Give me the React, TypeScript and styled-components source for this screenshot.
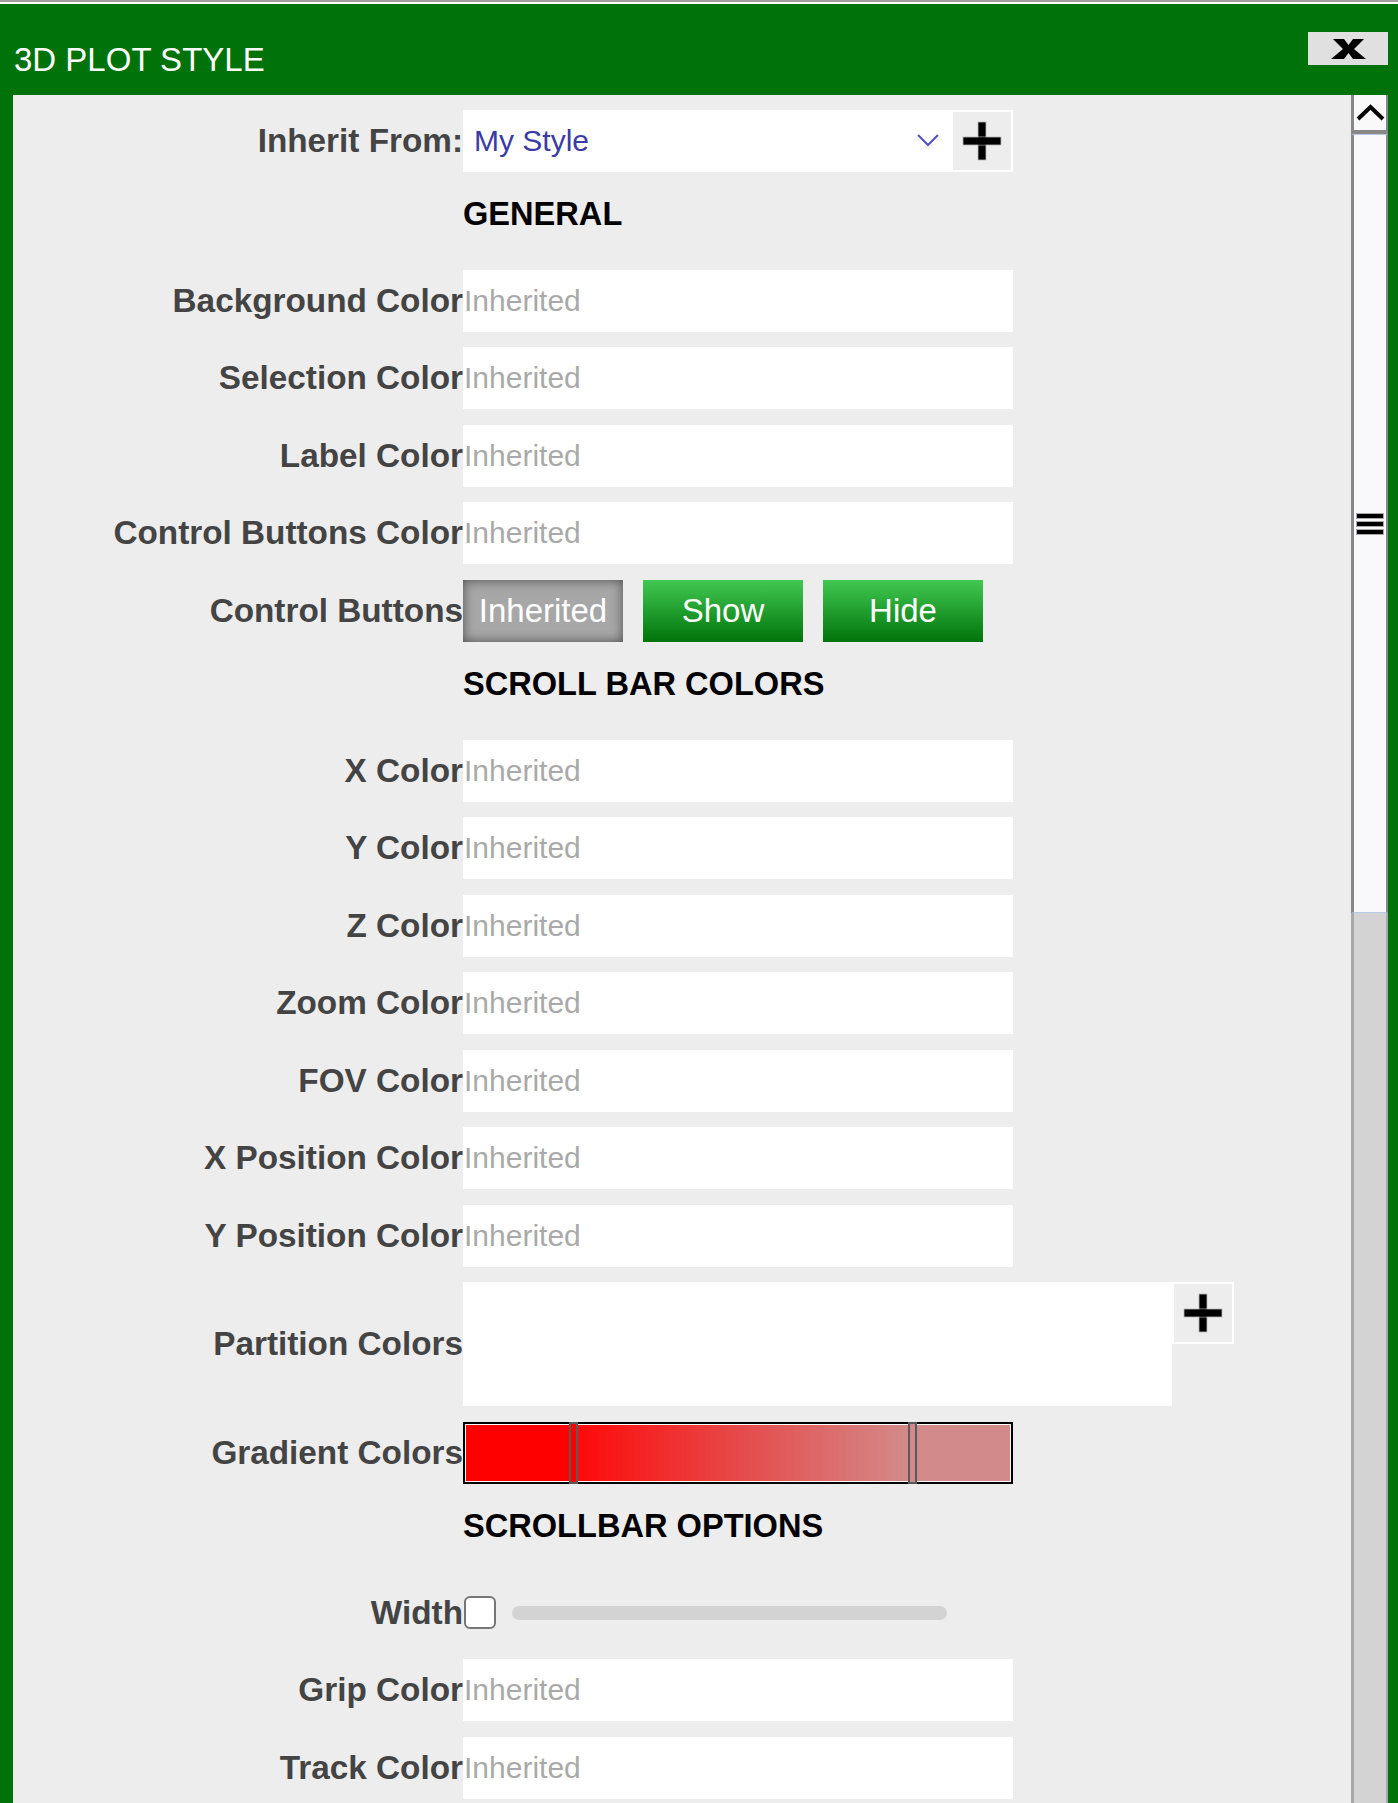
import React from "react";
import styled, { createGlobalStyle } from "styled-components";

const GlobalStyle = createGlobalStyle`
  html, body {
    margin: 0;
    padding: 0;
    background: #fff;
  }
  body {
    font-family: "Liberation Sans", Arial, sans-serif;
  }
`;

const green = "#00720a";

const Page = styled.div`
  height: 1803px;
  box-sizing: border-box;
  border-top: 2px solid #9e9e9e;
  padding-top: 2px;
  background: #fff;
  overflow: hidden;
  display: flex;
  flex-direction: column;
`;

const Dialog = styled.div`
  flex: 1;
  min-height: 0;
  background: ${green};
  padding: 0 10px 0 13px;
  display: flex;
  flex-direction: column;
`;

const Header = styled.div`
  height: 91px;
  flex: none;
  display: flex;
  justify-content: space-between;
  align-items: flex-start;
`;

const Title = styled.div`
  margin: 39px 0 0 1px;
  font-size: 33px;
  line-height: 33px;
  color: #fff;
`;

const CloseButton = styled.button`
  margin-top: 28px;
  width: 80px;
  height: 33px;
  border: none;
  padding: 0;
  background: #e0e0e0;
  display: flex;
  align-items: center;
  justify-content: center;
`;

const Body = styled.div`
  flex: 1;
  min-height: 0;
  display: flex;
  background: #ededed;
  overflow: hidden;
`;

const Form = styled.div`
  flex: 1;
  min-width: 0;
  padding-top: 0;
  & > :first-child {
    margin-top: 14.5px;
  }
`;

const Row = styled.div<{ $h?: number }>`
  display: flex;
  align-items: center;
  margin-top: 15.5px;
  height: ${(p) => p.$h ?? 62}px;
`;

const Label = styled.div`
  width: 450px;
  flex: none;
  text-align: right;
  font-weight: 700;
  font-size: 33.3px;
  color: #444;
  white-space: nowrap;
`;

const Heading = styled.div`
  margin-top: 15.5px;
  height: 67px;
  line-height: 53px;
  padding-left: 450px;
  font-weight: 700;
  font-size: 32.6px;
  color: #000;
`;

const Select = styled.div`
  display: flex;
  width: 550px;
  height: 62px;
  box-sizing: border-box;
  padding: 2px;
  background: #fff;
`;

const SelectValue = styled.div`
  flex: 1;
  display: flex;
  align-items: center;
  justify-content: space-between;
  padding: 0 14px 0 9px;
  font-size: 30px;
  color: #3b3ba5;
`;

const AddButton = styled.div<{ $bordered?: boolean }>`
  width: 58px;
  height: 58px;
  box-sizing: content-box;
  flex: none;
  background: #ededed;
  display: flex;
  align-items: center;
  justify-content: center;
  border: ${(p) => (p.$bordered ? "2px solid #fff" : "none")};
`;

const Input = styled.input`
  width: 550px;
  height: 62px;
  box-sizing: border-box;
  border: none;
  outline: none;
  background: #fff;
  padding: 0 0 0 1px;
  margin: 0;
  font-family: "Liberation Sans", Arial, sans-serif;
  font-size: 30px;
  color: #333;
  &::placeholder {
    color: #a9a9a9;
  }
`;

const ButtonGroup = styled.div`
  display: flex;
  gap: 20px;
`;

const ToggleButton = styled.button<{ $active?: boolean }>`
  width: 160px;
  height: 62px;
  border: none;
  padding: 0;
  font-family: "Liberation Sans", Arial, sans-serif;
  font-size: 33px;
  color: #fff;
  background: ${(p) =>
    p.$active ? "#a7a7a7" : "linear-gradient(to bottom, #42c852, #00740a)"};
  box-shadow: ${(p) => (p.$active ? "inset 0 0 12px rgba(0,0,0,0.55)" : "none")};
`;

const PartitionGroup = styled.div`
  align-self: stretch;
  display: flex;
  align-items: flex-start;
`;

const PartitionBox = styled.div`
  width: 709px;
  height: 124px;
  background: #fff;
`;

const GradientBar = styled.div`
  width: 550px;
  height: 62px;
  box-sizing: border-box;
  border: 2px solid #000;
  box-shadow: inset 0 0 0 1px #fff;
  display: flex;
  padding: 1px;
`;

const Swatch = styled.div<{ $w?: number; $bg: string }>`
  width: ${(p) => (p.$w ? `${p.$w}px` : "auto")};
  flex: ${(p) => (p.$w ? "none" : "1")};
  background: ${(p) => p.$bg};
`;

const Stop = styled.div<{ $bg: string }>`
  width: 5px;
  flex: none;
  margin: -3px 0;
  background: ${(p) => p.$bg};
  border: 2px solid #5a5a5a;
`;

const Check = styled.div`
  margin-left: 1px;
  width: 28px;
  height: 29px;
  border: 2px solid #767676;
  border-radius: 6px;
  background: #fff;
`;

const SliderTrack = styled.div`
  margin-left: 16px;
  width: 435px;
  height: 14px;
  border-radius: 7px;
  background: #d3d3d3;
`;

const Scrollbar = styled.div`
  width: 37px;
  flex: none;
  display: flex;
  flex-direction: column;
`;

const ScrollUp = styled.div`
  height: 35px;
  flex: none;
  background: #f9f9fa;
  border-left: 3px solid #888;
  border-right: 2px solid #888;
  border-bottom: 4px solid #888;
  display: flex;
  align-items: center;
  justify-content: center;
`;

const Thumb = styled.div`
  height: 777px;
  flex: none;
  background: #f9f9fb;
  border-left: 3px solid #888;
  border-right: 2px solid #888;
  border-top: 1px solid #b9cbe8;
  border-bottom: 1px solid #b9cbe8;
  display: flex;
  flex-direction: column;
  align-items: center;
  justify-content: center;
  gap: 4px;
`;

const GripLine = styled.div`
  width: 26px;
  height: 4px;
  background: #000;
  box-shadow: 0 0 0 1px #aaa;
`;

const Track = styled.div`
  flex: 1;
  background: #d3d3d3;
  border-left: 3px solid #a8a8a8;
  border-right: 2px solid #a8a8a8;
`;

const PlusIcon = () => (
  <svg width="40" height="40" viewBox="0 0 40 40">
    <rect x="16" y="1" width="8" height="38" fill="#000" stroke="#bbb" strokeWidth="0.8" />
    <rect x="1" y="16" width="38" height="8" fill="#000" stroke="#bbb" strokeWidth="0.8" />
    <rect x="16.4" y="16.4" width="7.2" height="7.2" fill="#000" />
  </svg>
);

const CloseIcon = () => (
  <svg width="35" height="20" viewBox="0 0 35 20">
    <polygon
      points="2,0 13,0 17.5,6 22,0 33,0 23,10 35,20 22,20 17.5,14 13,20 0,20 12,10"
      fill="#000"
    />
  </svg>
);

const ChevronDown = () => (
  <svg width="22" height="13" viewBox="0 0 22 13">
    <polyline points="1,1 11,11 21,1" fill="none" stroke="#5050c0" strokeWidth="2" />
  </svg>
);

const ChevronUp = () => (
  <svg width="29" height="17" viewBox="0 0 29 17">
    <polyline points="2,15 14.5,3 27,15" fill="none" stroke="#000" strokeWidth="4" />
  </svg>
);

const general = ["Background Color", "Selection Color", "Label Color", "Control Buttons Color"];
const scrollColors = [
  "X Color",
  "Y Color",
  "Z Color",
  "Zoom Color",
  "FOV Color",
  "X Position Color",
  "Y Position Color",
];

const ColorRow = ({ label }: { label: string }) => (
  <Row>
    <Label>{label}</Label>
    <Input placeholder="Inherited" />
  </Row>
);

export default function App() {
  return (
    <>
      <GlobalStyle />
      <Page>
        <Dialog>
          <Header>
            <Title>3D PLOT STYLE</Title>
            <CloseButton>
              <CloseIcon />
            </CloseButton>
          </Header>
          <Body>
            <Form>
              <Row>
                <Label>Inherit From:</Label>
                <Select>
                  <SelectValue>
                    <span>My Style</span>
                    <ChevronDown />
                  </SelectValue>
                  <AddButton>
                    <PlusIcon />
                  </AddButton>
                </Select>
              </Row>

              <Heading>GENERAL</Heading>
              {general.map((l) => (
                <ColorRow key={l} label={l} />
              ))}
              <Row>
                <Label>Control Buttons</Label>
                <ButtonGroup>
                  <ToggleButton $active>Inherited</ToggleButton>
                  <ToggleButton>Show</ToggleButton>
                  <ToggleButton>Hide</ToggleButton>
                </ButtonGroup>
              </Row>

              <Heading>SCROLL BAR COLORS</Heading>
              {scrollColors.map((l) => (
                <ColorRow key={l} label={l} />
              ))}
              <Row $h={124}>
                <Label>Partition Colors</Label>
                <PartitionGroup>
                  <PartitionBox />
                  <AddButton $bordered>
                    <PlusIcon />
                  </AddButton>
                </PartitionGroup>
              </Row>
              <Row>
                <Label>Gradient Colors</Label>
                <GradientBar>
                  <Swatch $w={103} $bg="#ff0000" />
                  <Stop $bg="#ff0000" />
                  <Swatch $w={330} $bg="linear-gradient(to right, #ff0a0a, #e84545 45%, #d38a8a)" />
                  <Stop $bg="#d08a8a" />
                  <Swatch $bg="#d38a8a" />
                </GradientBar>
              </Row>

              <Heading>SCROLLBAR OPTIONS</Heading>
              <Row>
                <Label>Width</Label>
                <Check />
                <SliderTrack />
              </Row>
              <ColorRow label="Grip Color" />
              <ColorRow label="Track Color" />
            </Form>
            <Scrollbar>
              <ScrollUp>
                <ChevronUp />
              </ScrollUp>
              <Thumb>
                <GripLine />
                <GripLine />
                <GripLine />
              </Thumb>
              <Track />
            </Scrollbar>
          </Body>
        </Dialog>
      </Page>
    </>
  );
}
